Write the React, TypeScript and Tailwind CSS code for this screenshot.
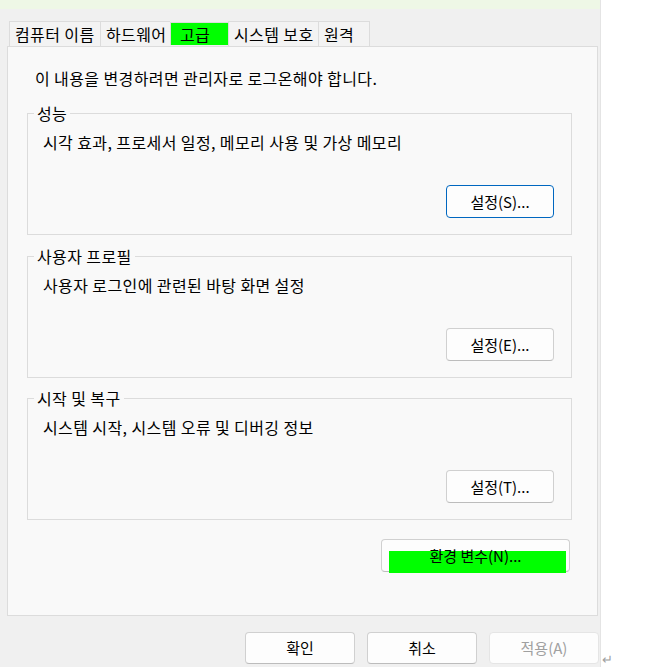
import React from "react";

const tabs = [
  { label: "컴퓨터 이름", w: "w-[91px]", active: false },
  { label: "하드웨어", w: "w-[70px]", active: false },
  { label: "고급", w: "w-[58px]", active: true },
  { label: "시스템 보호", w: "w-[90px]", active: false },
  { label: "원격", w: "w-[52px]", active: false },
];

const btn =
  "flex items-center justify-center rounded-[4px] border bg-[#fdfdfd] text-[15px] leading-[22px] tracking-normal";

function GroupBox({
  title,
  text,
  button,
  primary,
  className,
}: {
  title: string;
  text: string;
  button: string;
  primary?: boolean;
  className: string;
}) {
  return (
    <div
      className={`relative ml-[19px] flex h-[122px] w-[545px] flex-col border border-[#dcdcdc] pl-[15px] pt-[17px] ${className}`}
    >
      <span className="absolute -top-[12px] left-[6px] bg-[#f9f9f9] px-[3px] leading-[22px]">
        {title}
      </span>
      <p className="leading-[22px]">{text}</p>
      <button
        className={`${btn} mb-[16px] mr-[17px] mt-auto h-[33px] w-[108px] self-end ${
          primary ? "border-[#0067c0]" : "border-[#d0d0d0] border-b-[#bcbcbc]"
        }`}
      >
        {button}
      </button>
    </div>
  );
}

export default function App() {
  return (
    <div className="flex h-[667px] w-[650px] bg-white font-['Noto_Sans_CJK_KR','Noto_Sans',sans-serif] text-[16px] tracking-[0.4px] text-black">
      <div className="flex h-full w-[601px] flex-col border-r border-[#e4e4e4] bg-[#f0f0f0]">
        <div className="h-[9px] bg-[#eef7e6]" />

        {/* tabs */}
        <div className="mt-[12px] flex h-[25px] pl-[9px]">
          {tabs.map((t) => (
            <div
              key={t.label}
              className={`${t.w} flex items-center border-l border-t border-[#dcdcdc] pl-[5px] leading-[22px] last:border-r ${
                t.active ? "mt-[1px] mb-[1px] bg-[#00ff00] pl-[9px]" : "bg-[#f3f3f3]"
              }`}
            >
              {t.label}
            </div>
          ))}
        </div>

        {/* panel */}
        <div className="ml-[7px] flex h-[570px] w-[591px] flex-col border border-[#dcdcdc] bg-[#f9f9f9] pt-[20px]">
          <p className="pl-[27px] leading-[22px]">
            이 내용을 변경하려면 관리자로 로그온해야 합니다.
          </p>

          <GroupBox
            className="mt-[24px]"
            title="성능"
            text="시각 효과, 프로세서 일정, 메모리 사용 및 가상 메모리"
            button="설정(S)..."
            primary
          />
          <GroupBox
            className="mt-[21px]"
            title="사용자 프로필"
            text="사용자 로그인에 관련된 바탕 화면 설정"
            button="설정(E)..."
          />
          <GroupBox
            className="mt-[20px]"
            title="시작 및 복구"
            text="시스템 시작, 시스템 오류 및 디버깅 정보"
            button="설정(T)..."
          />

          <div className="ml-[19px] mt-[19px] flex w-[545px] justify-end">
            <button className={`${btn} relative mr-[2px] h-[33px] w-[189px] border-[#d0d0d0] border-b-[#bcbcbc]`}>
              <span className="absolute left-[7px] top-[11px] h-[22px] w-[177px] bg-[#00ff00]" />
              <span className="relative">환경 변수(N)...</span>
            </button>
          </div>
        </div>

        {/* dialog buttons */}
        <div className="mt-[16px] flex justify-end gap-[12px] pr-[1px]">
          <button className={`${btn} h-[32px] w-[110px] border-[#d0d0d0] border-b-[#bcbcbc]`}>
            확인
          </button>
          <button className={`${btn} h-[32px] w-[110px] border-[#d0d0d0] border-b-[#bcbcbc]`}>
            취소
          </button>
          <button className={`${btn} h-[32px] w-[110px] border-[#e5e5e5] bg-[#f5f5f5] text-[#a0a0a0]`}>
            적용(A)
          </button>
        </div>
      </div>

      <div className="flex items-end pb-[1px] pl-[1px]">
        <span className="text-[13px] leading-[14px] text-[#a0a0a0]">↵</span>
      </div>
    </div>
  );
}
